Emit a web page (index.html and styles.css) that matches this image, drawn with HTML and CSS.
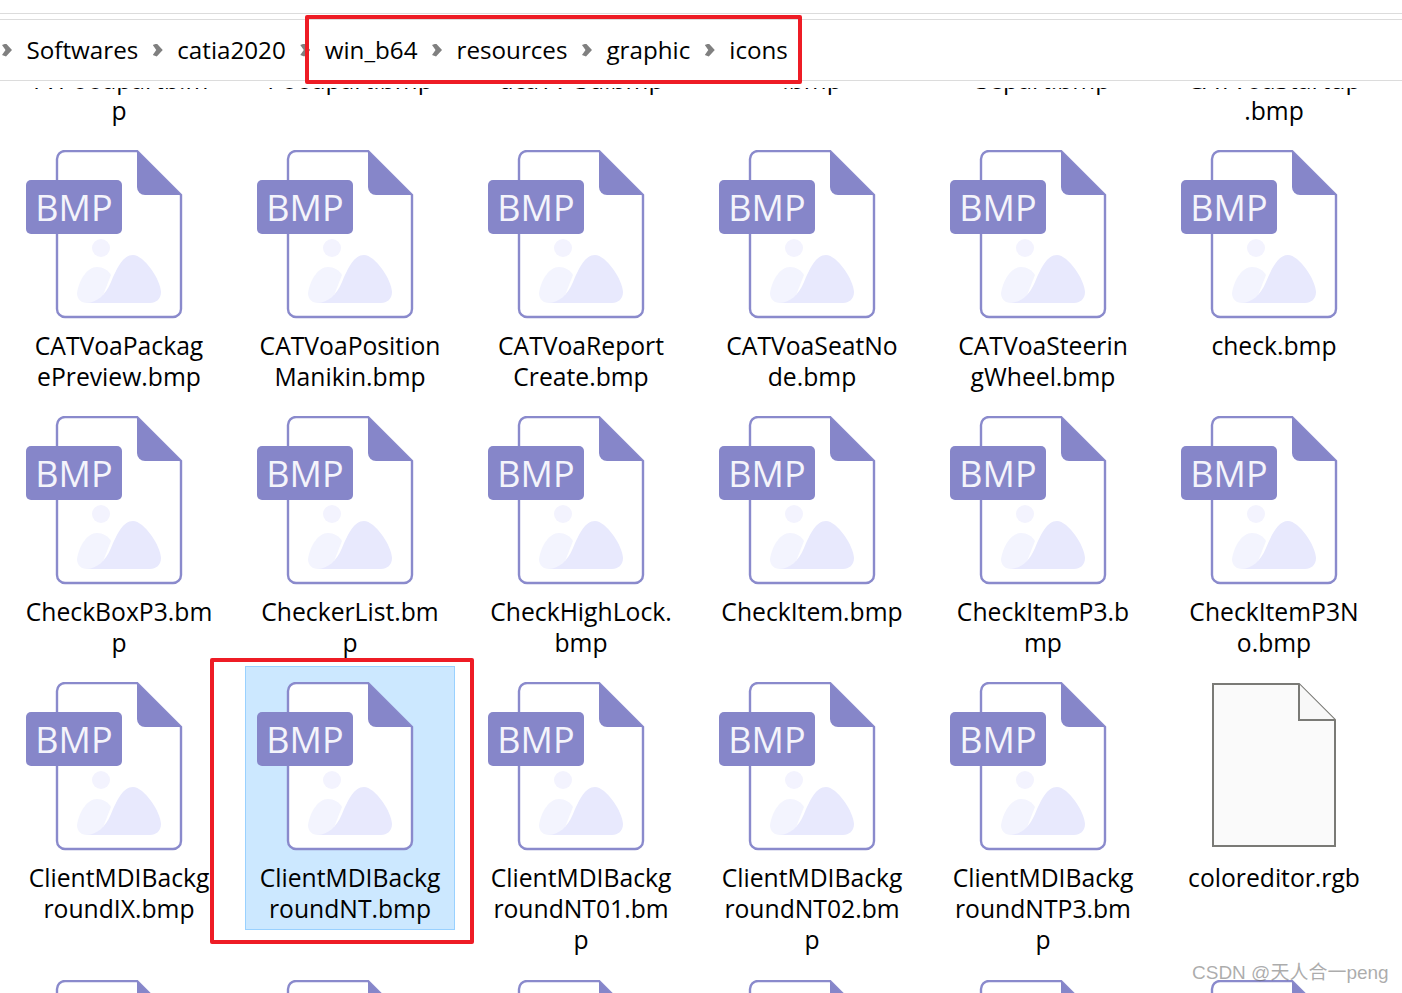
FILE: index.html
```html
<!DOCTYPE html>
<html lang="en">
<head>
  <meta charset="UTF-8" />
  <title>icons</title>
  <link rel="stylesheet" href="styles.css">
</head>
<body>
  <svg class="defs" width="0" height="0">
    <symbol id="bmp-file" viewBox="0 0 160 170">
      <path d="M40 1H112L156 45V159A8 8 0 0 1 148 167H40A8 8 0 0 1 32 159V9A8 8 0 0 1 40 1Z" fill="#fff" stroke="#8a8acc" stroke-width="2.4"/>
      <path d="M112 1L156 45H120A8 8 0 0 1 112 37Z" fill="#8686c9"/>
      <circle cx="76" cy="98" r="9" fill="#f3f3fe"/>
      <path d="M52 143C54 130 62 117 72 117C78 117 83 120 86 125L75 153H62C56 153 52 149 52 143Z" fill="#f3f4fe"/>
      <path d="M62 153C72 152 80 146 86 132C92 118 98 105 108 105C119 105 136 130 136 142C136 149 131 153 125 153Z" fill="#e8e9fd"/>
    </symbol>
    <symbol id="plain-file" viewBox="0 0 160 170">
      <path d="M33 2H119L155 38V164H33Z" fill="#fafafa" stroke="#7a7a76" stroke-width="2"/>
      <path d="M119 2V38H155" fill="#f8f8f8" stroke="#7a7a76" stroke-width="2"/>
    </symbol>
  </svg>

  <div class="topline"></div>
  <div class="breadcrumb">
    <span class="chev"></span><span>Softwares</span>
    <span class="chev"></span><span>catia2020</span>
    <span class="chev"></span><span>win_b64</span>
    <span class="chev"></span><span>resources</span>
    <span class="chev"></span><span>graphic</span>
    <span class="chev"></span><span>icons</span>
  </div>

  <div class="files">
    <div class="grid">
      <div class="item"><div class="icon"></div><div class="label">TVI-ooapartb.m<br>p</div></div>
      <div class="item"><div class="icon"></div><div class="label">I-ooapart.bmp</div></div>
      <div class="item"><div class="icon"></div><div class="label">dcaTV-Sd.bmp</div></div>
      <div class="item"><div class="icon"></div><div class="label">.bmp</div></div>
      <div class="item"><div class="icon"></div><div class="label">Separt.bmp</div></div>
      <div class="item"><div class="icon"></div><div class="label">CATVoaStartup<br>.bmp</div></div>

      <div class="item"><div class="icon"><svg><use href="#bmp-file"/></svg><span class="badge">BMP</span></div><div class="label">CATVoaPackag<br>ePreview.bmp</div></div>
      <div class="item"><div class="icon"><svg><use href="#bmp-file"/></svg><span class="badge">BMP</span></div><div class="label">CATVoaPosition<br>Manikin.bmp</div></div>
      <div class="item"><div class="icon"><svg><use href="#bmp-file"/></svg><span class="badge">BMP</span></div><div class="label">CATVoaReport<br>Create.bmp</div></div>
      <div class="item"><div class="icon"><svg><use href="#bmp-file"/></svg><span class="badge">BMP</span></div><div class="label">CATVoaSeatNo<br>de.bmp</div></div>
      <div class="item"><div class="icon"><svg><use href="#bmp-file"/></svg><span class="badge">BMP</span></div><div class="label">CATVoaSteerin<br>gWheel.bmp</div></div>
      <div class="item"><div class="icon"><svg><use href="#bmp-file"/></svg><span class="badge">BMP</span></div><div class="label">check.bmp</div></div>

      <div class="item"><div class="icon"><svg><use href="#bmp-file"/></svg><span class="badge">BMP</span></div><div class="label">CheckBoxP3.bm<br>p</div></div>
      <div class="item"><div class="icon"><svg><use href="#bmp-file"/></svg><span class="badge">BMP</span></div><div class="label">CheckerList.bm<br>p</div></div>
      <div class="item"><div class="icon"><svg><use href="#bmp-file"/></svg><span class="badge">BMP</span></div><div class="label">CheckHighLock.<br>bmp</div></div>
      <div class="item"><div class="icon"><svg><use href="#bmp-file"/></svg><span class="badge">BMP</span></div><div class="label">CheckItem.bmp</div></div>
      <div class="item"><div class="icon"><svg><use href="#bmp-file"/></svg><span class="badge">BMP</span></div><div class="label">CheckItemP3.b<br>mp</div></div>
      <div class="item"><div class="icon"><svg><use href="#bmp-file"/></svg><span class="badge">BMP</span></div><div class="label">CheckItemP3N<br>o.bmp</div></div>

      <div class="item"><div class="icon"><svg><use href="#bmp-file"/></svg><span class="badge">BMP</span></div><div class="label">ClientMDIBackg<br>roundIX.bmp</div></div>
      <div class="item selected"><div class="icon"><svg><use href="#bmp-file"/></svg><span class="badge">BMP</span></div><div class="label">ClientMDIBackg<br>roundNT.bmp</div></div>
      <div class="item"><div class="icon"><svg><use href="#bmp-file"/></svg><span class="badge">BMP</span></div><div class="label tall">ClientMDIBackg<br>roundNT01.bm<br>p</div></div>
      <div class="item"><div class="icon"><svg><use href="#bmp-file"/></svg><span class="badge">BMP</span></div><div class="label tall">ClientMDIBackg<br>roundNT02.bm<br>p</div></div>
      <div class="item"><div class="icon"><svg><use href="#bmp-file"/></svg><span class="badge">BMP</span></div><div class="label tall">ClientMDIBackg<br>roundNTP3.bm<br>p</div></div>
      <div class="item"><div class="icon"><svg><use href="#plain-file"/></svg></div><div class="label">coloreditor.rgb</div></div>

      <div class="item"><div class="icon"><svg><use href="#bmp-file"/></svg></div></div>
      <div class="item"><div class="icon"><svg><use href="#bmp-file"/></svg></div></div>
      <div class="item"><div class="icon"><svg><use href="#bmp-file"/></svg></div></div>
      <div class="item"><div class="icon"><svg><use href="#bmp-file"/></svg></div></div>
      <div class="item"><div class="icon"><svg><use href="#bmp-file"/></svg></div></div>
      <div class="item"><div class="icon"><svg><use href="#bmp-file"/></svg></div></div>
    </div>
  </div>

  <div class="mark mark-path"></div>
  <div class="mark mark-file"></div>
  <div class="watermark">CSDN @天人合一peng</div>
</body>
</html>
```

FILE: styles.css
```css
html, body {
  height: 100%;
}

body {
  margin: 0;
  background-color: white;
  color: #000;
  font-family: "Open Sans", "Noto Sans", sans-serif;
  font-size: 24.7px;
  overflow: hidden;
  display: flex;
  flex-direction: column;
  position: relative;
}

.defs {
  position: absolute;
}

.topline {
  height: 5px;
  margin-top: 13px;
  flex: none;
  border-top: 1px solid #dcdcdc;
}

.breadcrumb {
  flex: none;
  height: 58px;
  display: flex;
  align-items: center;
  gap: 14.5px;
  border-top: 1px solid #dcdcdc;
  border-bottom: 1px solid #dcdcdc;
  padding: 0 0 2px 2px;
  font-size: 24.2px;
}

.chev {
  width: 10px;
  height: 13px;
  margin-top: 2px;
  background-color: #808080;
  clip-path: polygon(0 12%, 40% 0, 100% 50%, 40% 100%, 0 88%, 35% 50%);
}

.files {
  flex: 1;
  overflow: hidden;
  min-height: 0;
  margin-top: 7px;
}

/* list is scrolled, first row is partly under the address bar */
.grid {
  display: grid;
  grid-template-columns: repeat(6, 210px);
  column-gap: 21px;
  row-gap: 2px;
  padding-left: 14px;
  margin-top: -220px;
}

.item {
  box-sizing: border-box;
  padding: 16px 0 5px;
  border: 1px solid transparent;
}

.item.selected {
  background-color: #cce8ff;
  border-color: #99d1ff;
  align-self: start;
}

.icon {
  position: relative;
  height: 170px;
  margin: -1px 0 10px 10px;
}

.icon svg {
  width: 160px;
  height: 170px;
  display: block;
}

.badge {
  position: absolute;
  left: 1px;
  top: 30px;
  width: 96px;
  height: 54px;
  border-radius: 5px;
  background-color: #8686c9;
  color: #f4f4fb;
  font-size: 36px;
  line-height: 56px;
  text-align: center;
}

.label {
  line-height: 31px;
  text-align: center;
  white-space: nowrap;
}

.label.tall {
  padding-bottom: 1px;
}

.mark {
  position: absolute;
  box-sizing: border-box;
  border: 4px solid #ee1c25;
  border-radius: 2px;
}

.mark-path {
  left: 305px;
  top: 15px;
  width: 497px;
  height: 69px;
}

.mark-file {
  left: 210px;
  top: 658px;
  width: 264px;
  height: 286px;
}

.watermark {
  position: absolute;
  left: 1192px;
  top: 960px;
  font-family: "Liberation Sans", "Noto Sans CJK SC", sans-serif;
  font-size: 19px;
  line-height: 26px;
  color: rgba(90, 90, 90, 0.5);
  white-space: nowrap;
}
```
